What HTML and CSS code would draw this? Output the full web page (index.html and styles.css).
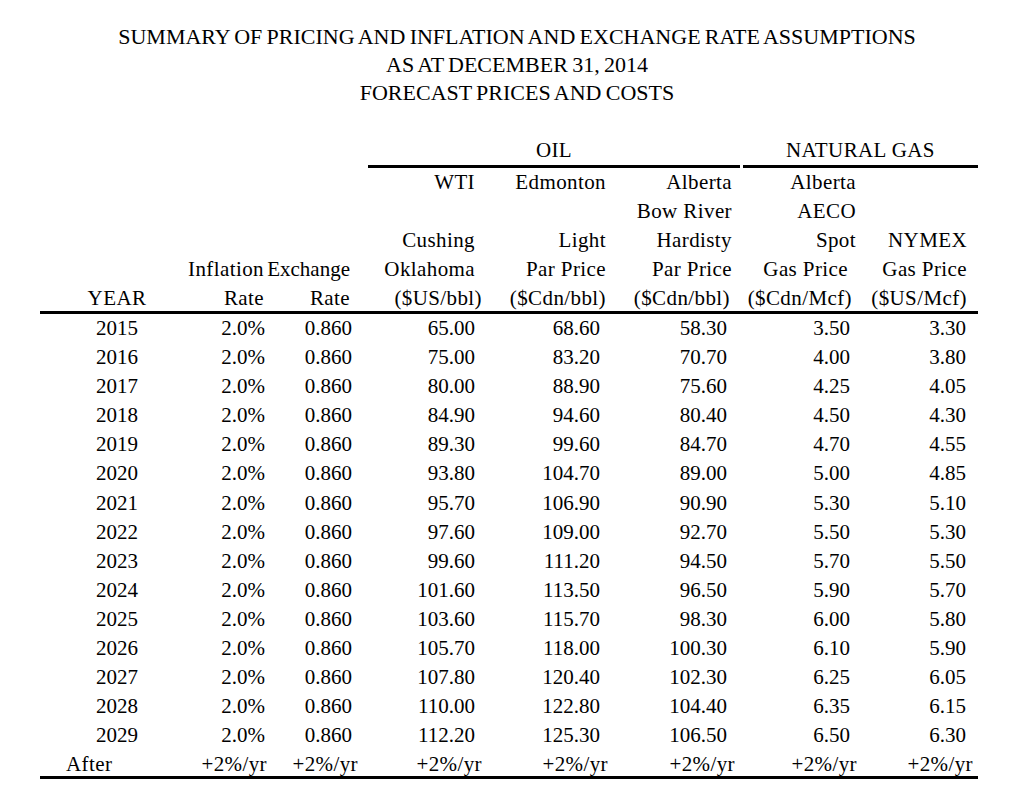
FILE: index.html
```html
<!DOCTYPE html>
<html lang="en">
<head>
<meta charset="utf-8">
<title>Summary of Pricing and Inflation and Exchange Rate Assumptions</title>
<link rel="stylesheet" href="styles.css">
</head>
<body>
<div class="report">
  <header class="title">
    <h1 class="title-line">SUMMARY OF PRICING AND INFLATION AND EXCHANGE RATE ASSUMPTIONS</h1>
    <p class="title-line">AS AT DECEMBER 31, 2014</p>
    <p class="title-line">FORECAST PRICES AND COSTS</p>
  </header>

  <div class="sheet">
    <div class="row group">
      <div class="cell grp oil">OIL</div>
      <div class="cell grp gas">NATURAL GAS</div>
    </div>

    <div class="head">
      <div class="row">
        <div class="cell c0"></div><div class="cell c1"></div><div class="cell c2"></div>
        <div class="cell c3">WTI</div>
        <div class="cell c4">Edmonton</div>
        <div class="cell c5">Alberta</div>
        <div class="cell c6">Alberta</div>
        <div class="cell c7"></div>
      </div>
      <div class="row">
        <div class="cell c0"></div><div class="cell c1"></div><div class="cell c2"></div>
        <div class="cell c3"></div>
        <div class="cell c4"></div>
        <div class="cell c5">Bow River</div>
        <div class="cell c6">AECO</div>
        <div class="cell c7"></div>
      </div>
      <div class="row">
        <div class="cell c0"></div><div class="cell c1"></div><div class="cell c2"></div>
        <div class="cell c3">Cushing</div>
        <div class="cell c4">Light</div>
        <div class="cell c5">Hardisty</div>
        <div class="cell c6">Spot</div>
        <div class="cell c7">NYMEX</div>
      </div>
      <div class="row">
        <div class="cell c0"></div>
        <div class="cell c1">Inflation</div>
        <div class="cell c2 tight">Exchange</div>
        <div class="cell c3">Oklahoma</div>
        <div class="cell c4">Par Price</div>
        <div class="cell c5">Par Price</div>
        <div class="cell c6 gasprice">Gas Price</div>
        <div class="cell c7">Gas Price</div>
      </div>
      <div class="row last units">
        <div class="cell c0">YEAR</div>
        <div class="cell c1">Rate</div>
        <div class="cell c2">Rate</div>
        <div class="cell c3">($US/bbl)</div>
        <div class="cell c4">($Cdn/bbl)</div>
        <div class="cell c5">($Cdn/bbl)</div>
        <div class="cell c6">($Cdn/Mcf)</div>
        <div class="cell c7">($US/Mcf)</div>
      </div>
    </div>

    <div class="body">
      <div class="row"><div class="cell c0">2015</div><div class="cell c1">2.0%</div><div class="cell c2">0.860</div><div class="cell c3">65.00</div><div class="cell c4">68.60</div><div class="cell c5">58.30</div><div class="cell c6">3.50</div><div class="cell c7">3.30</div></div>
      <div class="row"><div class="cell c0">2016</div><div class="cell c1">2.0%</div><div class="cell c2">0.860</div><div class="cell c3">75.00</div><div class="cell c4">83.20</div><div class="cell c5">70.70</div><div class="cell c6">4.00</div><div class="cell c7">3.80</div></div>
      <div class="row"><div class="cell c0">2017</div><div class="cell c1">2.0%</div><div class="cell c2">0.860</div><div class="cell c3">80.00</div><div class="cell c4">88.90</div><div class="cell c5">75.60</div><div class="cell c6">4.25</div><div class="cell c7">4.05</div></div>
      <div class="row"><div class="cell c0">2018</div><div class="cell c1">2.0%</div><div class="cell c2">0.860</div><div class="cell c3">84.90</div><div class="cell c4">94.60</div><div class="cell c5">80.40</div><div class="cell c6">4.50</div><div class="cell c7">4.30</div></div>
      <div class="row"><div class="cell c0">2019</div><div class="cell c1">2.0%</div><div class="cell c2">0.860</div><div class="cell c3">89.30</div><div class="cell c4">99.60</div><div class="cell c5">84.70</div><div class="cell c6">4.70</div><div class="cell c7">4.55</div></div>
      <div class="row"><div class="cell c0">2020</div><div class="cell c1">2.0%</div><div class="cell c2">0.860</div><div class="cell c3">93.80</div><div class="cell c4">104.70</div><div class="cell c5">89.00</div><div class="cell c6">5.00</div><div class="cell c7">4.85</div></div>
      <div class="row"><div class="cell c0">2021</div><div class="cell c1">2.0%</div><div class="cell c2">0.860</div><div class="cell c3">95.70</div><div class="cell c4">106.90</div><div class="cell c5">90.90</div><div class="cell c6">5.30</div><div class="cell c7">5.10</div></div>
      <div class="row"><div class="cell c0">2022</div><div class="cell c1">2.0%</div><div class="cell c2">0.860</div><div class="cell c3">97.60</div><div class="cell c4">109.00</div><div class="cell c5">92.70</div><div class="cell c6">5.50</div><div class="cell c7">5.30</div></div>
      <div class="row"><div class="cell c0">2023</div><div class="cell c1">2.0%</div><div class="cell c2">0.860</div><div class="cell c3">99.60</div><div class="cell c4">111.20</div><div class="cell c5">94.50</div><div class="cell c6">5.70</div><div class="cell c7">5.50</div></div>
      <div class="row"><div class="cell c0">2024</div><div class="cell c1">2.0%</div><div class="cell c2">0.860</div><div class="cell c3">101.60</div><div class="cell c4">113.50</div><div class="cell c5">96.50</div><div class="cell c6">5.90</div><div class="cell c7">5.70</div></div>
      <div class="row"><div class="cell c0">2025</div><div class="cell c1">2.0%</div><div class="cell c2">0.860</div><div class="cell c3">103.60</div><div class="cell c4">115.70</div><div class="cell c5">98.30</div><div class="cell c6">6.00</div><div class="cell c7">5.80</div></div>
      <div class="row"><div class="cell c0">2026</div><div class="cell c1">2.0%</div><div class="cell c2">0.860</div><div class="cell c3">105.70</div><div class="cell c4">118.00</div><div class="cell c5">100.30</div><div class="cell c6">6.10</div><div class="cell c7">5.90</div></div>
      <div class="row"><div class="cell c0">2027</div><div class="cell c1">2.0%</div><div class="cell c2">0.860</div><div class="cell c3">107.80</div><div class="cell c4">120.40</div><div class="cell c5">102.30</div><div class="cell c6">6.25</div><div class="cell c7">6.05</div></div>
      <div class="row"><div class="cell c0">2028</div><div class="cell c1">2.0%</div><div class="cell c2">0.860</div><div class="cell c3">110.00</div><div class="cell c4">122.80</div><div class="cell c5">104.40</div><div class="cell c6">6.35</div><div class="cell c7">6.15</div></div>
      <div class="row"><div class="cell c0">2029</div><div class="cell c1">2.0%</div><div class="cell c2">0.860</div><div class="cell c3">112.20</div><div class="cell c4">125.30</div><div class="cell c5">106.50</div><div class="cell c6">6.50</div><div class="cell c7">6.30</div></div>
    </div>

    <div class="row after">
      <div class="cell c0">After</div>
      <div class="cell c1">+2%/yr</div>
      <div class="cell c2">+2%/yr</div>
      <div class="cell c3">+2%/yr</div>
      <div class="cell c4">+2%/yr</div>
      <div class="cell c5">+2%/yr</div>
      <div class="cell c6">+2%/yr</div>
      <div class="cell c7">+2%/yr</div>
    </div>
  </div>
</div>
</body>
</html>
```

FILE: styles.css
```css
html, body {
  margin: 0;
  padding: 0;
  background: #ffffff;
}

body {
  color: #000000;
  font-family: "Liberation Serif", "Times New Roman", serif;
}

.report {
  width: 1024px;
}

/* ---------- title ---------- */
.title {
  padding: 23px 0 0 10px;
  text-align: center;
  font-size: 22px;
  line-height: 28px;
  letter-spacing: 0;
  word-spacing: -1.2px;
}

.title-line {
  margin: 0;
  font-size: inherit;
  font-weight: normal;
}

/* ---------- sheet ---------- */
.sheet {
  margin: 29.6px 0 0 40px;
  width: 938px;
  font-size: 21px;
}

.row {
  display: grid;
  grid-template-columns: 154px 72px 102px 122px 125px 127px 123px 113px;
  height: 29.1px;
  line-height: 29.1px;
}

.cell {
  display: flex;
  justify-content: flex-end;
  white-space: nowrap;
  min-width: 0;
}

/* group header row */
.group {
  height: auto;
  line-height: 27.9px;
  letter-spacing: 0.4px;
}

.grp {
  justify-content: center;
  border-bottom: 3px solid #000;
}

.oil {
  grid-column: 4 / span 3;
  margin-right: 2px;
}

.gas {
  grid-column: 7 / span 2;
  margin-left: 1px;
}

/* column headers */
.head {
  letter-spacing: 0.4px;
  border-bottom: 3px solid #000;
}

.head .row.last {
  height: 27.1px;
}

.head .tight {
  letter-spacing: 0;
}

.head .c0 { justify-content: center; }
.head .c1 { padding-right: 2px; }
.head .c2 { padding-right: 18px; }
.head .c3 { padding-right: 15px; }
.head .c4 { padding-right: 9px; }
.head .c5 { padding-right: 10px; }
.head .c6 { padding-right: 9px; }
.head .c7 { padding-right: 11px; }

.head .units .c3 { padding-right: 8px; }
.head .units .c5 { padding-right: 12px; }
.head .units .c6 { padding-right: 13px; }
.head .gasprice { padding-right: 17px; }

/* data rows */
.body .c0 { justify-content: center; }
.body .c1 { padding-right: 1px; }
.body .c2 { padding-right: 16px; }
.body .c3 { padding-right: 15px; }
.body .c4 { padding-right: 15px; }
.body .c5 { padding-right: 15px; }
.body .c6 { padding-right: 15px; }
.body .c7 { padding-right: 12px; }

/* trailing row */
.after {
  height: 25.5px;
  letter-spacing: 0.4px;
  border-bottom: 3px solid #000;
}

.after .c0 { justify-content: flex-start; padding-left: 26px; }
.after .c1 { padding-right: 0; margin-right: -1px; }
.after .c2 { padding-right: 10px; }
.after .c3 { padding-right: 8px; }
.after .c4 { padding-right: 7px; }
.after .c5 { padding-right: 7px; }
.after .c6 { padding-right: 8px; }
.after .c7 { padding-right: 5px; }
```
